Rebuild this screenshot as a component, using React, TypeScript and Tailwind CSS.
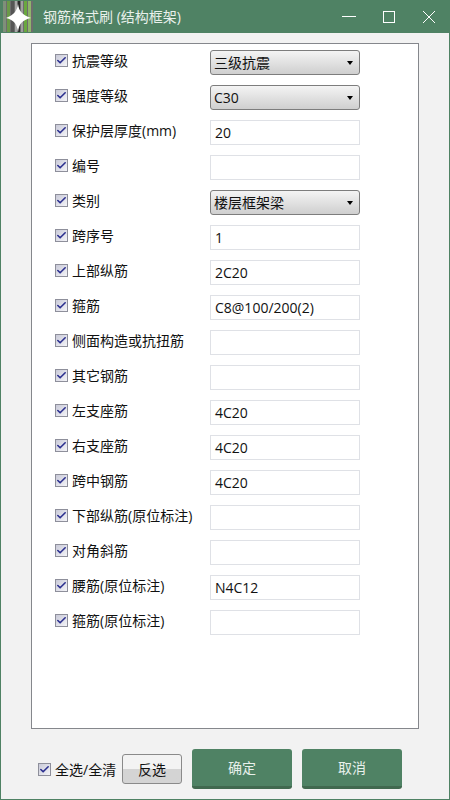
import { Check } from 'lucide-react';

type Row = { label: string; kind: 'select' | 'input'; value?: string };

const ROWS: Row[] = [
  { label: '抗震等级', kind: 'select', value: '三级抗震' },
  { label: '强度等级', kind: 'select', value: 'C30' },
  { label: '保护层厚度(mm)', kind: 'input', value: '20' },
  { label: '编号', kind: 'input' },
  { label: '类别', kind: 'select', value: '楼层框架梁' },
  { label: '跨序号', kind: 'input', value: '1' },
  { label: '上部纵筋', kind: 'input', value: '2C20' },
  { label: '箍筋', kind: 'input', value: 'C8@100/200(2)' },
  { label: '侧面构造或抗扭筋', kind: 'input' },
  { label: '其它钢筋', kind: 'input' },
  { label: '左支座筋', kind: 'input', value: '4C20' },
  { label: '右支座筋', kind: 'input', value: '4C20' },
  { label: '跨中钢筋', kind: 'input', value: '4C20' },
  { label: '下部纵筋(原位标注)', kind: 'input' },
  { label: '对角斜筋', kind: 'input' },
  { label: '腰筋(原位标注)', kind: 'input', value: 'N4C12' },
  { label: '箍筋(原位标注)', kind: 'input' },
];

function CheckMark() {
  return (
    <span className="flex h-[13px] w-[13px] shrink-0 items-center justify-center border border-[#8e8f9b] bg-gradient-to-br from-[#c9cad8] to-[#f4f4f8]">
      <Check className="h-[11px] w-[11px] text-[#2b2f8f]" strokeWidth={3.5} aria-hidden />
    </span>
  );
}

function Logo() {
  return (
    <svg width="30" height="31" viewBox="0 0 30 31" className="shrink-0" aria-hidden>
      <rect width="30" height="31" fill="#6d6d6d" />
      <rect x="0" width="3" height="31" fill="#7f8f7a" />
      <rect x="4" width="3" height="31" fill="#6a9a48" />
      <rect x="8" width="3" height="31" fill="#555" />
      <rect x="12" width="2" height="31" fill="#a8a8a8" />
      <rect x="15" width="2" height="31" fill="#2a2a2a" />
      <rect x="18" width="2" height="31" fill="#a0a0a0" />
      <rect x="21" width="3" height="31" fill="#6aa83f" />
      <rect x="25" width="3" height="31" fill="#8fb56a" />
      <path d="M15 3 C16 10 19 14 28 17 C19 19 16 23 15 31 C14 23 11 19 3 17 C11 14 14 10 15 3 Z" fill="#fff" />
    </svg>
  );
}

function Select({ value }: { value?: string }) {
  return (
    <div className="flex h-[25px] w-[150px] items-center justify-between rounded-[3px] border border-[#7d7d7d] bg-gradient-to-b from-[#f4f4f4] to-[#cfcfcf] pl-[3px] pr-[6px] text-[14px] text-[#111]">
      <span>{value}</span>
      <span className="h-0 w-0 border-x-[3px] border-t-[4px] border-x-transparent border-t-black" />
    </div>
  );
}

function Field({ value }: { value?: string }) {
  return (
    <div className="flex h-[25px] w-[150px] items-center border border-[#dfe1e6] bg-white pl-[4px] text-[14px] text-[#111]">
      {value}
    </div>
  );
}

export default function App() {
  return (
    <div
      className="flex h-[800px] w-[450px] flex-col overflow-hidden border-x border-b border-[#4f8264] bg-[#f2f2f2]"
      style={{ fontFamily: '"Open Sans", "Noto Sans CJK SC", sans-serif' }}
    >
      <div className="flex h-[33px] shrink-0 items-center bg-[#4f8264] pl-[2px] text-white">
        <Logo />
        <span className="ml-[10px] text-[14px] text-[#e8f0eb]">钢筋格式刷 (结构框架)</span>
        <div className="ml-auto flex items-center text-white">
          <svg width="14" height="1" className="mr-[27px]" aria-hidden>
            <rect width="14" height="1" fill="#fff" />
          </svg>
          <svg width="12" height="12" className="mr-[28px]" aria-hidden>
            <rect x="0.5" y="0.5" width="11" height="11" fill="none" stroke="#fff" />
          </svg>
          <svg width="12" height="12" className="mr-[14px]" aria-hidden>
            <path d="M0 0 L12 12 M12 0 L0 12" stroke="#fff" strokeWidth="1" />
          </svg>
        </div>
      </div>

      <div className="mx-[30px] mt-[10px] flex h-[686px] flex-col gap-[10px] border border-[#85878c] bg-white pl-[23px] pt-[6px]">
        {ROWS.map((row) => (
          <div key={row.label} className="flex h-[25px] items-center">
            <div className="flex w-[155px] -translate-y-[2px] items-center gap-[4px] text-[14px] text-[#111]">
              <CheckMark />
              <span className="whitespace-nowrap">{row.label}</span>
            </div>
            {row.kind === 'select' ? <Select value={row.value} /> : <Field value={row.value} />}
          </div>
        ))}
      </div>

      <div className="mt-[20px] flex items-start pl-[37px]">
        <div className="mt-[5px] flex h-[30px] w-[84px] items-center gap-[4px] text-[14px] text-[#111]">
          <CheckMark />
          <span className="whitespace-nowrap">全选/全清</span>
        </div>
        <button className="mt-[5px] h-[30px] w-[60px] rounded-[3px] border border-[#8a8a8a] bg-gradient-to-b from-[#f3f3f3] from-50% to-[#d4d4d4] to-50% text-[14px] text-[#111]">
          反选
        </button>
        <button className="ml-[10px] h-[40px] w-[100px] rounded-[3px] border-b-[3px] border-[#41694f] bg-[#4f8264] text-[14px] text-[#e8f0eb]">
          确定
        </button>
        <button className="ml-[10px] h-[40px] w-[100px] rounded-[3px] border-b-[3px] border-[#41694f] bg-[#4f8264] text-[14px] text-[#e8f0eb]">
          取消
        </button>
      </div>
    </div>
  );
}
